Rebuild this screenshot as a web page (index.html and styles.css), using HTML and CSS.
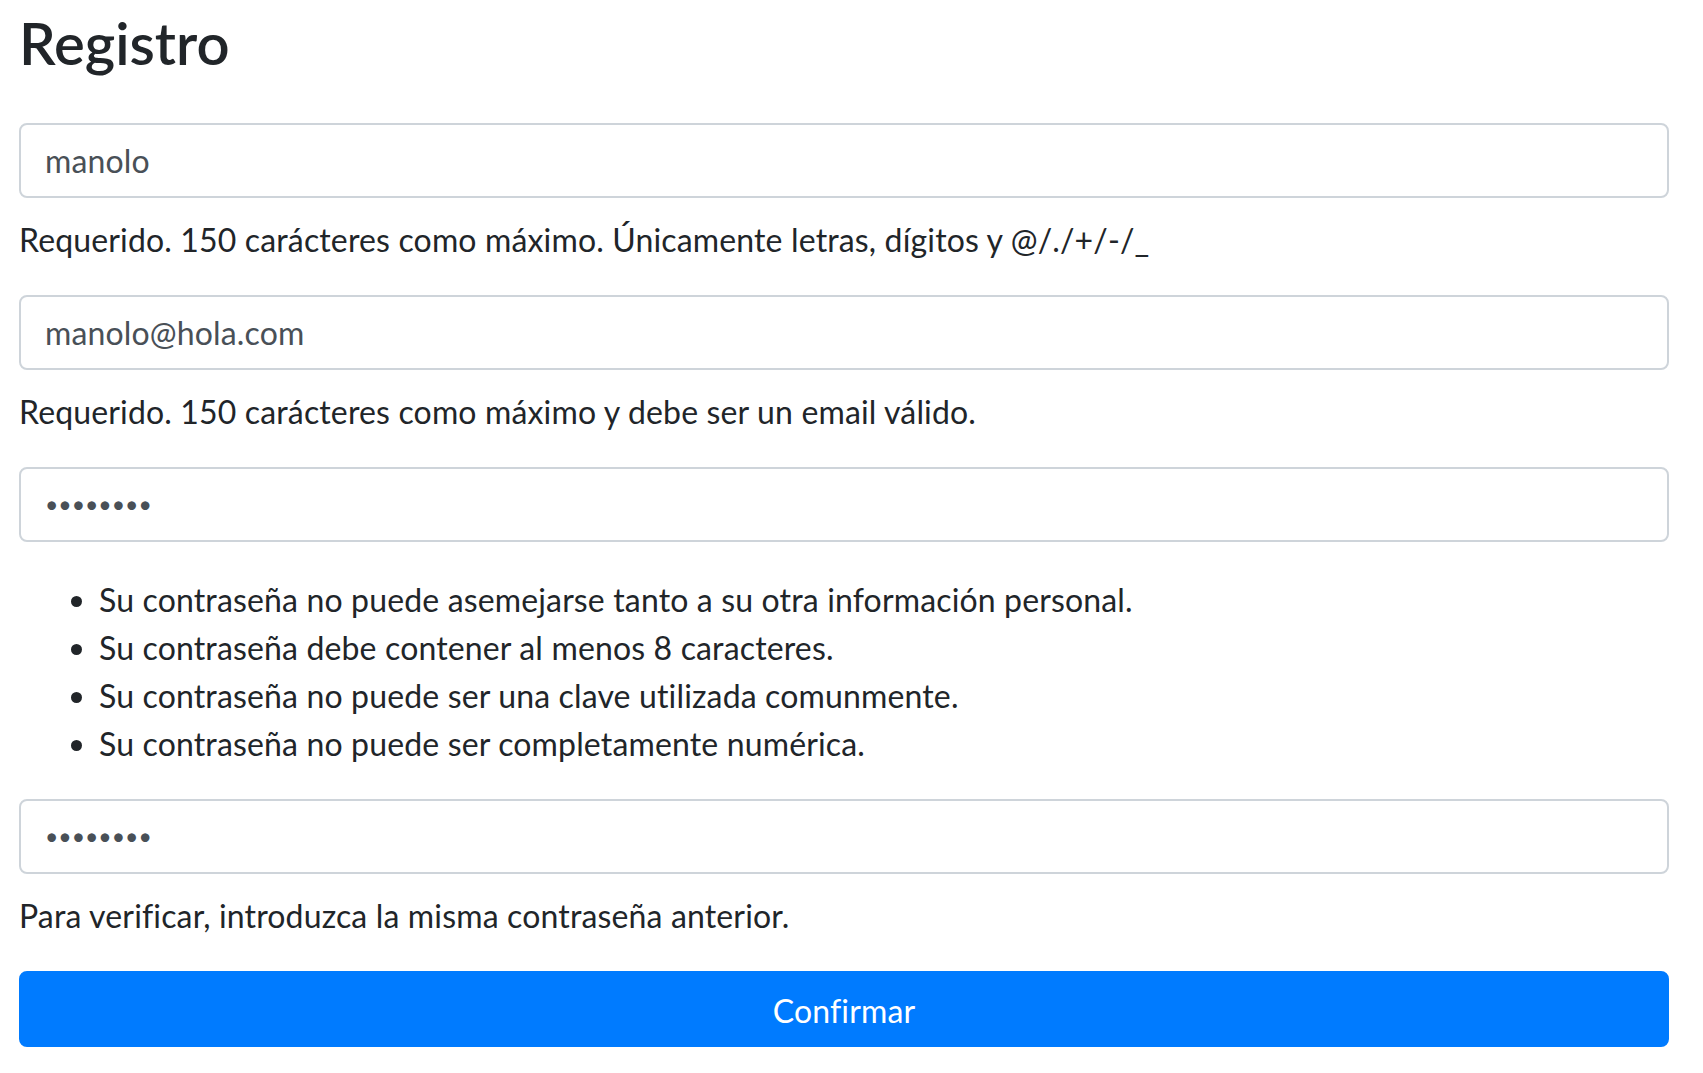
FILE: index.html
```html
<!DOCTYPE html>
<html lang="es">
<head>
    <meta charset="UTF-8">
    <meta name="viewport" content="width=device-width, initial-scale=1.0">
    <title>Registro</title>
    <link rel="stylesheet" href="styles.css">
</head>
<body>
    <div class="container">
        <h2>Registro</h2>

        <form class="signup">
            <div class="form-group">
                <input type="text" class="form-control" name="username" value="manolo">
                <div class="form-text">Requerido. 150 carácteres como máximo. Únicamente letras, dígitos y @/./+/-/_</div>
            </div>

            <div class="form-group">
                <input type="email" class="form-control" name="email" value="manolo@hola.com">
                <div class="form-text">Requerido. 150 carácteres como máximo y debe ser un email válido.</div>
            </div>

            <div class="form-group">
                <input type="password" class="form-control" name="password1" value="manolo12">
                <ul class="help-list">
                    <li>Su contraseña no puede asemejarse tanto a su otra información personal.</li>
                    <li>Su contraseña debe contener al menos 8 caracteres.</li>
                    <li>Su contraseña no puede ser una clave utilizada comunmente.</li>
                    <li>Su contraseña no puede ser completamente numérica.</li>
                </ul>
            </div>

            <div class="form-group">
                <input type="password" class="form-control" name="password2" value="manolo12">
                <div class="form-text">Para verificar, introduzca la misma contraseña anterior.</div>
            </div>

            <button type="submit" class="btn-primary">Confirmar</button>
        </form>
    </div>
</body>
</html>
```
FILE: styles.css
```css
body {
    margin: 0;
    font-family: Lato, "Liberation Sans", sans-serif;
    font-size: 32px;
    line-height: 1.5;
    letter-spacing: 0.15px;
    color: #212529;
    background-color: #fff;
}
.container {
    padding: 8px 34px 0 19px;
}
h2 {
    margin: 0 0 45px;
    font-size: 58px;
    font-weight: 600;
    line-height: 1.2;
    letter-spacing: 0;
}
.form-group {
    margin-bottom: 31px;
}
.form-control {
    display: block;
    width: 100%;
    height: 75px;
    box-sizing: border-box;
    padding: 12px 24px;
    font-family: inherit;
    font-size: 32px;
    letter-spacing: 0.15px;
    color: #495057;
    background-color: #fff;
    border: 2px solid #ced4da;
    border-radius: 8px;
    outline: none;
}
input[type="password"] {
    font-size: 23px;
    letter-spacing: 0;
}
.form-text {
    margin-top: 18px;
}
.help-list {
    margin: 34px 0 0;
    padding-left: 80px;
}
.btn-primary {
    display: block;
    width: 100%;
    height: 76px;
    padding: 3px 0 0;
    font-family: inherit;
    font-size: 32px;
    letter-spacing: 0.15px;
    color: #fff;
    background-color: #007bff;
    border: 2px solid #007bff;
    border-radius: 8px;
    cursor: pointer;
}
```
